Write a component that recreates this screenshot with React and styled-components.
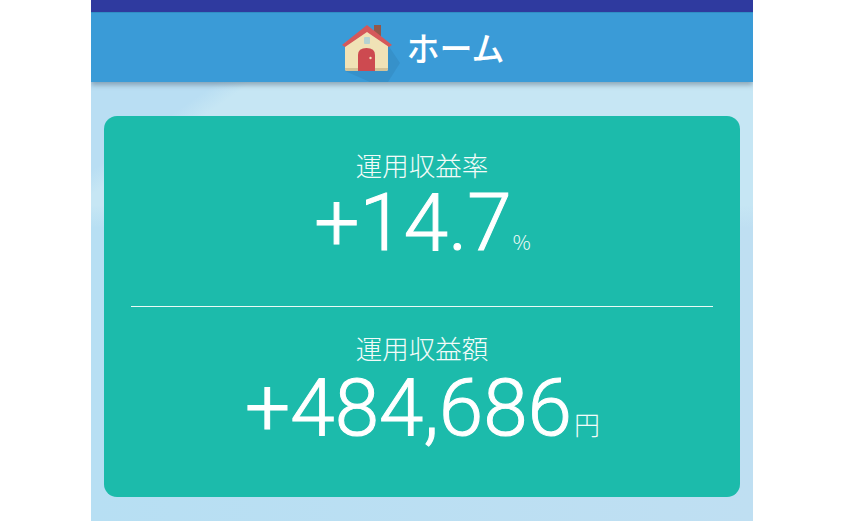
import React from "react";
import styled, { createGlobalStyle } from "styled-components";

const Global = createGlobalStyle`
  html, body { margin: 0; padding: 0; background: #fff; height: 521px; overflow: hidden; }
  #root { height: 521px; }
`;

const Page = styled.div`
  width: 662px;
  height: 521px;
  margin-left: 91px;
  display: flex;
  flex-direction: column;
  overflow: hidden;
  font-family: Roboto, "Noto Sans CJK JP", sans-serif;
  background:
    linear-gradient(145deg, #b9def3 0 140px, rgba(185, 222, 243, 0) 160px),
    linear-gradient(180deg, #c6e6f4 0 205px, rgba(198, 230, 244, 0) 228px),
    linear-gradient(90deg, #b7dff3 0%, #bfdff2 100%);
`;

const StatusBar = styled.div`
  height: 12px;
  flex: none;
  background: #2f3a9f;
  border-bottom: 1px solid #3090c8;
`;

const Header = styled.header`
  height: 69px;
  flex: none;
  background: #3a9bd7;
  box-shadow: 0 3px 5px rgba(70, 90, 110, 0.45);
  display: flex;
  align-items: center;
  justify-content: center;
  gap: 14px;
  padding-left: 3px;
  position: relative;
  box-sizing: border-box;
`;

const Title = styled.h1`
  margin: 0;
  font-family: "Noto Sans CJK JP", sans-serif;
  font-size: 33px;
  font-weight: 500;
  line-height: 1;
  color: #fff;
`;

const HouseSvg = styled.svg`
  flex: none;
  overflow: visible;
  margin-top: 5px;
`;

const Content = styled.main`
  flex: 1;
  padding: 34px 13px 24px;
  display: flex;
  min-height: 0;
`;

const Card = styled.section`
  flex: 1;
  background: #1cbbab;
  border-radius: 13px;
  padding: 0 27px;
  display: flex;
  flex-direction: column;
  color: #fff;
`;

const Stat = styled.div`
  height: ${(p) => p.$h}px;
  flex: none;
  padding-top: ${(p) => p.$top}px;
  box-sizing: border-box;
  display: flex;
  flex-direction: column;
  align-items: center;
`;

const Label = styled.div`
  font-family: "Noto Sans CJK JP", sans-serif;
  font-size: 26.5px;
  font-weight: 300;
  line-height: 30px;
  color: #f3fbf9;
`;

const ValueRow = styled.div`
  display: flex;
  align-items: baseline;
  line-height: 64px;
  height: 64px;
  padding-left: 1px;
  margin-top: ${(p) => p.$mt}px;
  gap: ${(p) => p.$gap}px;
`;

const Value = styled.span`
  font-size: 80px;
  font-weight: 300;
  -webkit-text-stroke: 1px #fff;
`;

const Unit = styled.span`
  font-family: "Noto Sans CJK JP", sans-serif;
  font-size: ${(p) => p.$size}px;
  font-weight: 300;
  color: #f3fbf9;
`;

const Divider = styled.hr`
  margin: 0;
  border: 0;
  height: 1px;
  flex: none;
  background: #eafaf6;
`;

const HouseIcon = () => (
  <HouseSvg width="50" height="50" viewBox="0 0 50 50" aria-hidden="true">
    <path d="M3 46 L28 57 H46 L58 38 L46 20 Z" fill="#2a6f9f" opacity="0.22" />
    <rect x="32" y="0" width="7" height="11" fill="#93574a" />
    <path d="M3 18 L25 3 L46 18 V44 Q46 46 44 46 H5 Q3 46 3 44 Z" fill="#f0e2b6" />
    <path d="M3 43 H46 V44 Q46 46 44 46 H5 Q3 46 3 44 Z" fill="#d4c297" />
    <path d="M0 20 L25 0 L50 20 L47 22 L25 7 L3 22 Z" fill="#d5585a" />
    <path d="M16 46 V30 Q16 23 24.5 23 Q33 23 33 30 V46 Z" fill="#cd4a50" />
    <circle cx="28.5" cy="33" r="1.2" fill="#f4dcb8" />
    <rect x="22" y="12" width="6" height="7" rx="1" fill="#b5d3d2" />
  </HouseSvg>
);

export default function App() {
  return (
    <>
      <Global />
      <Page>
        <StatusBar />
        <Header>
          <HouseIcon />
          <Title>ホーム</Title>
        </Header>
        <Content>
          <Card>
            <Stat $h={190} $top={34}>
              <Label>運用収益率</Label>
              <ValueRow $gap={1} $mt={11}>
                <Value>+14.7</Value>
                <Unit $size={20}>%</Unit>
              </ValueRow>
            </Stat>
            <Divider />
            <Stat $h={190} $top={26}>
              <Label>運用収益額</Label>
              <ValueRow $gap={2} $mt={13}>
                <Value>+484,686</Value>
                <Unit $size={26}>円</Unit>
              </ValueRow>
            </Stat>
          </Card>
        </Content>
      </Page>
    </>
  );
}
